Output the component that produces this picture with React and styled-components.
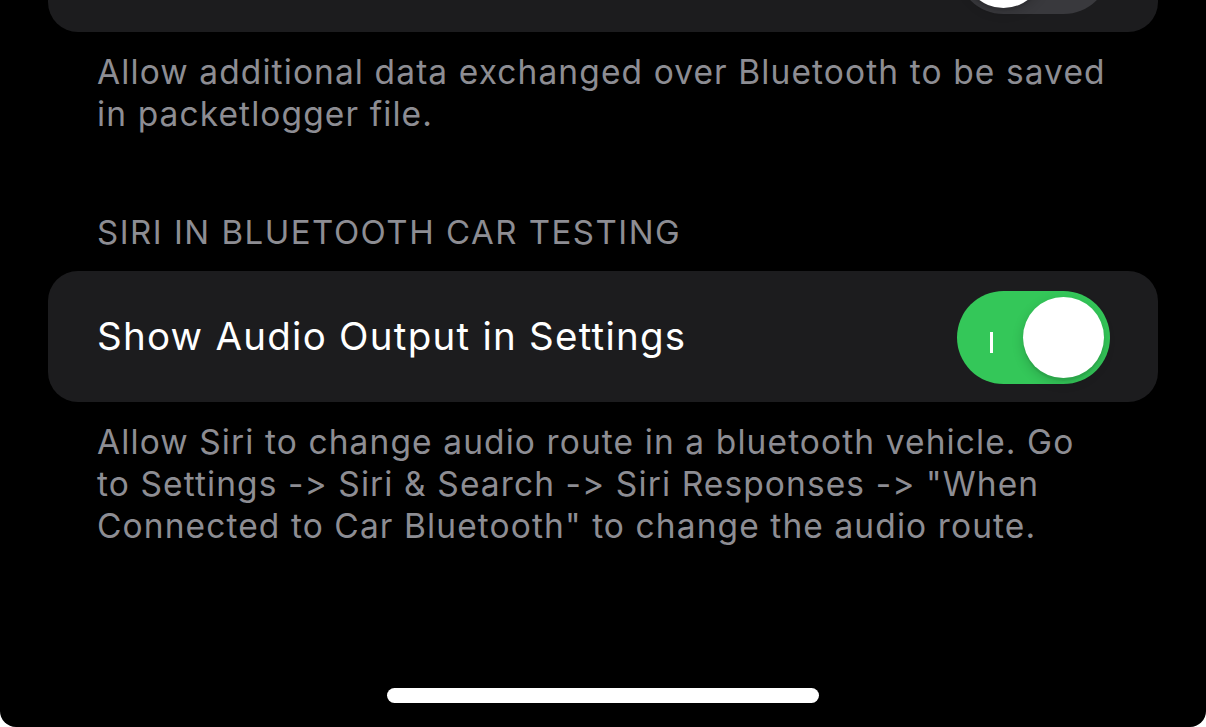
import React from 'react'
import styled, { createGlobalStyle } from 'styled-components'

const Global = createGlobalStyle`
  html, body {
    margin: 0;
    padding: 0;
    background: #ffffff;
  }
  body {
    font-family: Inter, "Liberation Sans", sans-serif;
    -webkit-font-smoothing: antialiased;
  }
`

const Screen = styled.div`
  width: 1206px;
  height: 727px;
  background: #000000;
  border-radius: 0 0 16px 16px;
  overflow: hidden;
  display: flex;
  flex-direction: column;
  padding: 0 48px;
  box-sizing: border-box;
`

const Card = styled.div`
  background: #1c1c1e;
  border-radius: 30px;
  height: 131px;
  display: flex;
  align-items: center;
  justify-content: space-between;
  padding: 0 48px 0 49px;
  box-sizing: border-box;
  flex-shrink: 0;
  margin-top: ${props => props.offset || 0}px;
`

const Label = styled.div`
  color: #ffffff;
  font-size: 38.5px;
  letter-spacing: 1.25px;
  line-height: 1;
`

const Footer = styled.div`
  color: #8d8d93;
  font-size: 33.5px;
  line-height: 42.3px;
  padding: 19px 0 0 49px;
  letter-spacing: 1.1px;
  white-space: nowrap;
`

const Header = styled.div`
  color: #8d8d93;
  font-size: 33px;
  line-height: 42px;
  text-transform: uppercase;
  padding: 75px 0 18px 49px;
  letter-spacing: 1.5px;
`

const Track = styled.div`
  width: 153px;
  height: 93px;
  border-radius: 47px;
  background: ${props => props.on ? '#34c759' : '#39393d'};
  display: flex;
  align-items: center;
  justify-content: ${props => props.on ? 'flex-end' : 'flex-start'};
  padding: 0 6px;
  box-sizing: border-box;
  position: relative;
  margin-top: 2px;
`

const Knob = styled.div`
  width: 81px;
  height: 81px;
  border-radius: 50%;
  background: #ffffff;
  box-shadow: 0 4px 12px rgba(0, 0, 0, 0.18), 0 3px 1px rgba(0, 0, 0, 0.06);
`

const OnMark = styled.span`
  position: absolute;
  left: 33px;
  top: 41px;
  width: 3px;
  height: 21px;
  background: #ffffff;
`

const HomeBar = styled.div`
  margin-top: auto;
  margin-bottom: 24px;
  align-self: center;
  width: 432px;
  height: 15px;
  border-radius: 8px;
  background: #ffffff;
`

const Toggle = ({ on }) => (
  <Track on={on ? 1 : 0}>
    {on && <OnMark />}
    <Knob />
  </Track>
)

export default function App() {
  return (
    <>
      <Global />
      <Screen>
        <Card offset={-99}>
          <Label />
          <Toggle />
        </Card>
        <Footer>
          Allow additional data exchanged over Bluetooth to be saved<br />
          in packetlogger file.
        </Footer>
        <Header>Siri in Bluetooth Car Testing</Header>
        <Card>
          <Label>Show Audio Output in Settings</Label>
          <Toggle on />
        </Card>
        <Footer>
          Allow Siri to change audio route in a bluetooth vehicle. Go<br />
          to Settings -&gt; Siri &amp; Search -&gt; Siri Responses -&gt; "When<br />
          Connected to Car Bluetooth" to change the audio route.
        </Footer>
        <HomeBar />
      </Screen>
    </>
  )
}
